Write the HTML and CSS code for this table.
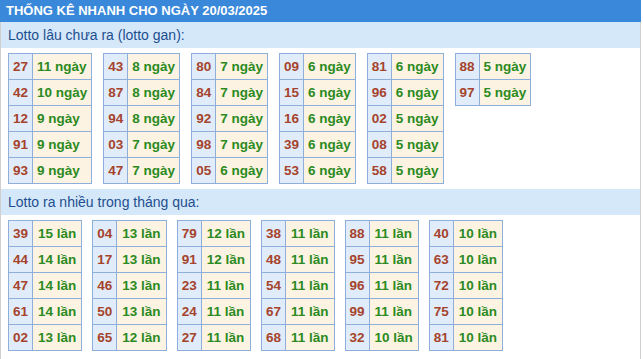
FILE: index.html
```html
<!DOCTYPE html>
<html lang="vi">

<head>
    <meta charset="UTF-8" />
    <title>Thống kê nhanh</title>
    <link rel="stylesheet" href="styles.css">
</head>

<body>
    <div class="tk-box">
        <div class="tk-title">THỐNG KÊ NHANH CHO NGÀY 20/03/2025</div>

        <div class="tk-body">
            <div class="tk-head">Lotto lâu chưa ra (lotto gan):</div>
            <div class="tk-group">
                <table class="tk-table">
                    <tr><td class="num">27</td><td class="val">11 ngày</td></tr>
                    <tr><td class="num">42</td><td class="val">10 ngày</td></tr>
                    <tr><td class="num">12</td><td class="val">9 ngày</td></tr>
                    <tr><td class="num">91</td><td class="val">9 ngày</td></tr>
                    <tr><td class="num">93</td><td class="val">9 ngày</td></tr>
                </table>
                <table class="tk-table">
                    <tr><td class="num">43</td><td class="val">8 ngày</td></tr>
                    <tr><td class="num">87</td><td class="val">8 ngày</td></tr>
                    <tr><td class="num">94</td><td class="val">8 ngày</td></tr>
                    <tr><td class="num">03</td><td class="val">7 ngày</td></tr>
                    <tr><td class="num">47</td><td class="val">7 ngày</td></tr>
                </table>
                <table class="tk-table">
                    <tr><td class="num">80</td><td class="val">7 ngày</td></tr>
                    <tr><td class="num">84</td><td class="val">7 ngày</td></tr>
                    <tr><td class="num">92</td><td class="val">7 ngày</td></tr>
                    <tr><td class="num">98</td><td class="val">7 ngày</td></tr>
                    <tr><td class="num">05</td><td class="val">6 ngày</td></tr>
                </table>
                <table class="tk-table">
                    <tr><td class="num">09</td><td class="val">6 ngày</td></tr>
                    <tr><td class="num">15</td><td class="val">6 ngày</td></tr>
                    <tr><td class="num">16</td><td class="val">6 ngày</td></tr>
                    <tr><td class="num">39</td><td class="val">6 ngày</td></tr>
                    <tr><td class="num">53</td><td class="val">6 ngày</td></tr>
                </table>
                <table class="tk-table">
                    <tr><td class="num">81</td><td class="val">6 ngày</td></tr>
                    <tr><td class="num">96</td><td class="val">6 ngày</td></tr>
                    <tr><td class="num">02</td><td class="val">5 ngày</td></tr>
                    <tr><td class="num">08</td><td class="val">5 ngày</td></tr>
                    <tr><td class="num">58</td><td class="val">5 ngày</td></tr>
                </table>
                <table class="tk-table">
                    <tr><td class="num">88</td><td class="val">5 ngày</td></tr>
                    <tr><td class="num">97</td><td class="val">5 ngày</td></tr>
                </table>
            </div>

            <div class="tk-head">Lotto ra nhiều trong tháng qua:</div>
            <div class="tk-group tk-group-lan">
                <table class="tk-table">
                    <tr><td class="num">39</td><td class="val">15 lần</td></tr>
                    <tr><td class="num">44</td><td class="val">14 lần</td></tr>
                    <tr><td class="num">47</td><td class="val">14 lần</td></tr>
                    <tr><td class="num">61</td><td class="val">14 lần</td></tr>
                    <tr><td class="num">02</td><td class="val">13 lần</td></tr>
                </table>
                <table class="tk-table">
                    <tr><td class="num">04</td><td class="val">13 lần</td></tr>
                    <tr><td class="num">17</td><td class="val">13 lần</td></tr>
                    <tr><td class="num">46</td><td class="val">13 lần</td></tr>
                    <tr><td class="num">50</td><td class="val">13 lần</td></tr>
                    <tr><td class="num">65</td><td class="val">12 lần</td></tr>
                </table>
                <table class="tk-table">
                    <tr><td class="num">79</td><td class="val">12 lần</td></tr>
                    <tr><td class="num">91</td><td class="val">12 lần</td></tr>
                    <tr><td class="num">23</td><td class="val">11 lần</td></tr>
                    <tr><td class="num">24</td><td class="val">11 lần</td></tr>
                    <tr><td class="num">27</td><td class="val">11 lần</td></tr>
                </table>
                <table class="tk-table">
                    <tr><td class="num">38</td><td class="val">11 lần</td></tr>
                    <tr><td class="num">48</td><td class="val">11 lần</td></tr>
                    <tr><td class="num">54</td><td class="val">11 lần</td></tr>
                    <tr><td class="num">67</td><td class="val">11 lần</td></tr>
                    <tr><td class="num">68</td><td class="val">11 lần</td></tr>
                </table>
                <table class="tk-table">
                    <tr><td class="num">88</td><td class="val">11 lần</td></tr>
                    <tr><td class="num">95</td><td class="val">11 lần</td></tr>
                    <tr><td class="num">96</td><td class="val">11 lần</td></tr>
                    <tr><td class="num">99</td><td class="val">11 lần</td></tr>
                    <tr><td class="num">32</td><td class="val">10 lần</td></tr>
                </table>
                <table class="tk-table">
                    <tr><td class="num">40</td><td class="val">10 lần</td></tr>
                    <tr><td class="num">63</td><td class="val">10 lần</td></tr>
                    <tr><td class="num">72</td><td class="val">10 lần</td></tr>
                    <tr><td class="num">75</td><td class="val">10 lần</td></tr>
                    <tr><td class="num">81</td><td class="val">10 lần</td></tr>
                </table>
            </div>
        </div>
    </div>
</body>

</html>
```

FILE: styles.css
```css
body {
    margin: 0;
    background: #fff;
    font-family: "Liberation Sans", Arial, sans-serif;
}

.tk-box {
    width: 641px;
    min-height: 359px;
    display: flex;
    flex-direction: column;
}

/* blue title bar */
.tk-title {
    height: 22px;
    line-height: 22px;
    padding-left: 6px;
    background: #3a88da;
    color: #fff;
    font-size: 13px;
    font-weight: bold;
}

.tk-body {
    flex: 1;
    border-left: 1px solid #cfcfcf;
    border-right: 1px solid #cfcfcf;
}

.tk-head {
    height: 26px;
    line-height: 26px;
    padding-left: 7px;
    background: #d5e8fa;
    color: #1d4f8f;
    font-size: 14px;
}

.tk-group {
    display: flex;
    align-items: flex-start;
    gap: 11px;
    padding: 5px 7px 5px;
}

.tk-table {
    border-collapse: collapse;
    font-size: 13.5px;
    font-weight: bold;
}

.tk-table td {
    height: 25px;
    padding: 0 4px;
    border: 1px solid #8eaedc;
    white-space: nowrap;
}

.tk-table .num {
    background: #e0ecf9;
    color: #a5432d;
    text-align: center;
}

.tk-table .val {
    background: #fdf3e2;
    color: #2b8a21;
}

.tk-group-lan {
    gap: 10px;
}

.tk-group-lan .val {
    padding: 0 5px;
}
```
